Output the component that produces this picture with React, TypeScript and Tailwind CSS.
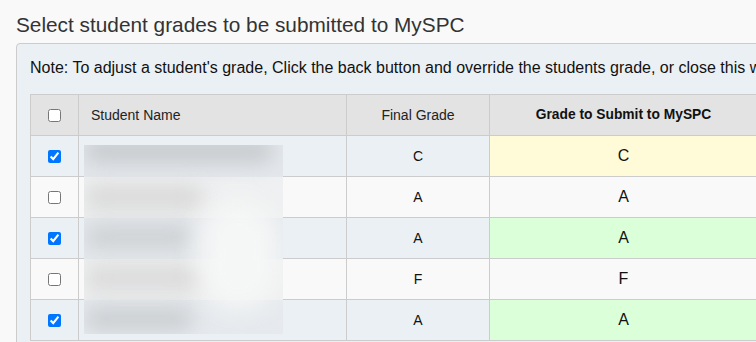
import React from "react";

type Row = { checked: boolean; final: string; submit: string; tone: "yellow" | "green" | "none" };

const rows: Row[] = [
  { checked: true, final: "C", submit: "C", tone: "yellow" },
  { checked: false, final: "A", submit: "A", tone: "none" },
  { checked: true, final: "A", submit: "A", tone: "green" },
  { checked: false, final: "F", submit: "F", tone: "none" },
  { checked: true, final: "A", submit: "A", tone: "green" },
];

export default function App() {
  return (
    <div className="w-[756px] h-[342px] overflow-hidden bg-[#f9f9f9] font-['Liberation_Sans',Arial,sans-serif] text-[#333]">
      <div className="pl-4 pt-[13px]">
        <h3 className="text-[20.8px] leading-6 mb-[6px] text-[#333]">
          Select student grades to be submitted to MySPC
        </h3>
        <div className="w-[1000px] border border-[#cccccc] rounded bg-[#ebf0f5] pl-[13px] pt-3 pb-4">
          <p className="text-base leading-6 whitespace-nowrap text-[#111]">
            Note: To adjust a student's grade, Click the back button and override the students grade, or close this window to cancel.
          </p>
          <div className="relative mt-[14px] w-fit">
            <table className="border-collapse table-fixed text-[14px] text-[#222]">
              <thead>
                <tr className="h-[41px] bg-[#e3e3e3]">
                  <th className="w-[48px] border border-[#cccccc] p-0 align-middle">
                    <div className="flex items-center justify-center">
                      <input type="checkbox" readOnly className="m-0 w-[13px] h-[13px]" />
                    </div>
                  </th>
                  <th className="w-[268px] border border-[#cccccc] pl-3 text-left font-normal">Student Name</th>
                  <th className="w-[143px] border border-[#cccccc] text-center font-normal">Final Grade</th>
                  <th className="w-[268px] border border-[#cccccc] text-center font-bold text-[13.8px] text-[#111]">
                    Grade to Submit to MySPC
                  </th>
                </tr>
              </thead>
              <tbody>
                {rows.map((r, i) => {
                  const odd = i % 2 === 0;
                  const rowBg = odd ? "bg-[#ebf0f5]" : "bg-[#f9f9f9]";
                  const submitBg =
                    r.tone === "yellow" ? "bg-[#fffad7]" : r.tone === "green" ? "bg-[#dbffd9]" : "";
                  return (
                    <tr key={i} className={`h-[41px] ${rowBg}`}>
                      <td className="border border-[#cccccc] p-0 align-middle">
                        <div className="flex items-center justify-center">
                          <input type="checkbox" readOnly defaultChecked={r.checked} className="m-0 w-[13px] h-[13px]" />
                        </div>
                      </td>
                      <td className="border border-[#cccccc]"></td>
                      <td className="border border-[#cccccc] text-center text-[14px] text-[#111]">{r.final}</td>
                      <td className={`border border-[#cccccc] text-center text-[16px] text-[#111] ${submitBg}`}>{r.submit}</td>
                    </tr>
                  );
                })}
              </tbody>
            </table>
            {/* blurred (redacted) student names overlay */}
            <div className="absolute left-[54px] top-[51px] w-[199px] h-[189px] overflow-hidden">
              <div className="flex flex-col h-full">
                <div className="h-[32px] bg-[#e4e8ec]" />
                <div className="h-[41px] bg-[#eff0f1]" />
                <div className="h-[41px] bg-[#e6eaee]" />
                <div className="h-[41px] bg-[#eff0f1]" />
                <div className="h-[34px] bg-[#e6eaee]" />
              </div>
              <div className="absolute left-[0px] top-[-6px] w-[190px] h-[24px] rounded-full bg-[#c6cacd] blur-[10px]" />
              <div className="absolute left-[0px] top-[40px] w-[120px] h-[24px] rounded-full bg-[#d8d8d8] blur-[10px]" />
              <div className="absolute left-[0px] top-[80px] w-[110px] h-[24px] rounded-full bg-[#cdd0d3] blur-[10px]" />
              <div className="absolute left-[0px] top-[121px] w-[120px] h-[24px] rounded-full bg-[#d9d9d9] blur-[10px]" />
              <div className="absolute left-[0px] top-[162px] w-[110px] h-[24px] rounded-full bg-[#caced1] blur-[10px]" />
              <div className="absolute left-[115px] top-[55px] w-[80px] h-[110px] rounded-full bg-[#f5f6f6] blur-[12px]" />
            </div>
          </div>
        </div>
      </div>
    </div>
  );
}
